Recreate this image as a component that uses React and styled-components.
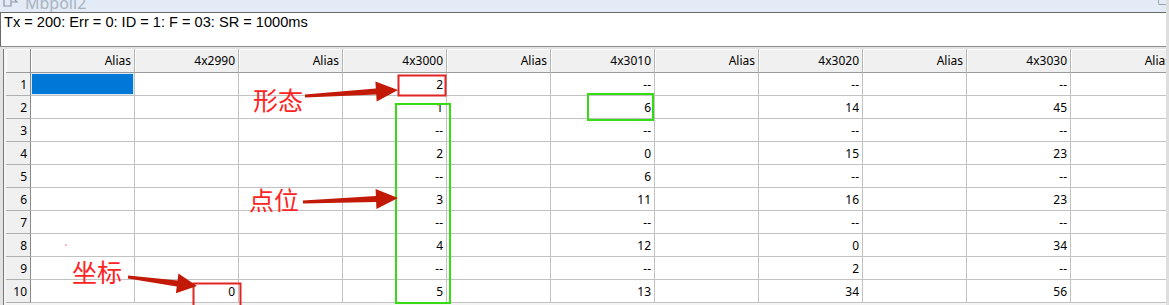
import React from 'react';
import styled, { createGlobalStyle } from 'styled-components';

const GlobalStyle = createGlobalStyle`
  html, body {
    margin: 0;
    padding: 0;
    background: #ffffff;
  }
  * {
    box-sizing: border-box;
  }
`;

const Page = styled.div`
  position: relative;
  width: 1169px;
  height: 305px;
  overflow: hidden;
  background: #ffffff;
  display: flex;
  flex-direction: column;
  border-right: 3px solid #dedede;
`;

const TitleBar = styled.div`
  height: 12px;
  flex: none;
  display: flex;
  align-items: flex-start;
  gap: 6px;
  padding-left: 3px;
  overflow: hidden;
  background: #e2ebf6;
  position: relative;
`;

const TitleText = styled.span`
  font-family: 'Noto Sans', sans-serif;
  font-size: 16px;
  line-height: 16px;
  color: #a9b3c0;
  margin-top: -5px;
`;

const CornerBox = styled.div`
  position: absolute;
  right: -4px;
  top: -4px;
  width: 12px;
  height: 9px;
  border-left: 1px solid #9aa3ad;
  border-bottom: 1px solid #9aa3ad;
  border-bottom-left-radius: 2px;
`;

const StatusBox = styled.div`
  height: 35px;
  flex: none;
  border-top: 1px solid #6a6a6a;
  border-left: 1px solid #6a6a6a;
  border-bottom: 1px solid #8c8c8c;
  padding: 1px 0 0 3px;
  font-family: 'Liberation Sans', Arial, sans-serif;
  font-size: 14.6px;
  color: #000000;
  background: #ffffff;
`;

const GridFrame = styled.div`
  flex: 1;
  display: flex;
  border-top: 2px solid #e3e3e3;
  background: #e3e3e3;
  padding-left: 3px;
  overflow: hidden;
`;

const GridInner = styled.div`
  flex: 1;
  border-left: 1px solid #7a7a7a;
  padding-left: 2px;
  background: #f4f4f4;
  overflow: hidden;
`;

const Grid = styled.div`
  display: grid;
  grid-template-columns: 25px repeat(11, 104px);
  grid-auto-rows: 23px;
  grid-template-rows: 24px;
  font-family: 'Noto Sans', sans-serif;
  font-size: 12px;
  color: #000000;
  background: #ffffff;
`;

const HeadCell = styled.div`
  background: #f0f0f0;
  border-right: 1px solid ${p => (p.$corner ? '#8a8a8a' : '#b4b4b4')};
  border-bottom: 1px solid #9a9a9a;
  box-shadow: inset 1px 1px 0 #ffffff;
  display: flex;
  align-items: center;
  justify-content: flex-end;
  padding-right: 3px;
  white-space: nowrap;
  overflow: hidden;
`;

const RowHead = styled.div`
  background: #f0f0f0;
  border-right: 1px solid #8a8a8a;
  border-bottom: 1px solid #b0b0b0;
  display: flex;
  align-items: center;
  justify-content: flex-end;
  padding-right: 3px;
`;

const Cell = styled.div`
  background: ${p => (p.$selected ? '#0078d7' : '#ffffff')};
  border-right: 1px solid #c2c2c2;
  border-bottom: 1px solid #c2c2c2;
  box-shadow: ${p => (p.$selected ? 'inset 0 0 0 1px #d6e9f8' : 'none')};
  display: flex;
  align-items: center;
  justify-content: flex-end;
  padding-right: 3px;
  white-space: nowrap;
`;

const Overlay = styled.svg`
  position: absolute;
  left: 0;
  top: 0;
  pointer-events: none;
`;

const Label = styled.div`
  position: absolute;
  left: ${p => p.$x}px;
  top: ${p => p.$y}px;
  font-family: 'Noto Sans CJK SC', 'Noto Sans', sans-serif;
  font-size: 25px;
  line-height: 25px;
  color: #ff2424;
`;

const columns = ['Alias', '4x2990', 'Alias', '4x3000', 'Alias', '4x3010', 'Alias', '4x3020', 'Alias', '4x3030', 'Alias'];

const data = {
  3: ['2', '1', '--', '2', '--', '3', '--', '4', '--', '5'],
  5: ['--', '6', '--', '0', '6', '11', '--', '12', '--', '13'],
  7: ['--', '14', '--', '15', '--', '16', '--', '0', '2', '34'],
  9: ['--', '45', '--', '23', '--', '23', '--', '34', '--', '56'],
};

const valueAt = (col, row) => {
  if (col === 1) return row === 9 ? '0' : '';
  if (data[col]) return data[col][row];
  return '';
};

const rows = Array.from({ length: 10 }, (_, i) => i);

function AppIcon() {
  return (
    <svg width="16" height="12" viewBox="0 0 16 12">
      <path d="M1 0 L1 6 L8 6 L8 0" fill="none" stroke="#8d96a3" strokeWidth="1.2" />
      <path d="M9 2 L14 2 L12 0" fill="none" stroke="#8d96a3" strokeWidth="1.2" />
    </svg>
  );
}

// tapered arrow: thin tail widening to a head at the tip
function Arrow({ x1, y1, x2, y2, head = 22, half = 10, tail = 1.5, shaft = 3 }) {
  const dx = x2 - x1;
  const dy = y2 - y1;
  const len = Math.hypot(dx, dy);
  const ux = dx / len;
  const uy = dy / len;
  const nx = -uy;
  const ny = ux;
  const bx = x2 - ux * head;
  const by = y2 - uy * head;
  const pts = [
    [x1 + nx * tail, y1 + ny * tail],
    [bx + nx * shaft, by + ny * shaft],
    [bx + nx * half, by + ny * half],
    [x2, y2],
    [bx - nx * half, by - ny * half],
    [bx - nx * shaft, by - ny * shaft],
    [x1 - nx * tail, y1 - ny * tail],
  ];
  return <polygon points={pts.map(p => p.join(',')).join(' ')} fill="#c21a06" />;
}

export default function App() {
  return (
    <>
      <GlobalStyle />
      <Page>
        <TitleBar>
          <AppIcon />
          <TitleText>Mbpoll2</TitleText>
          <CornerBox />
        </TitleBar>
        <StatusBox>Tx = 200: Err = 0: ID = 1: F = 03: SR = 1000ms</StatusBox>
        <GridFrame>
          <GridInner>
            <Grid>
              <HeadCell $corner />
              {columns.map((c, i) => (
                <HeadCell key={i}>{c}</HeadCell>
              ))}
              {rows.map(r => (
                <React.Fragment key={r}>
                  <RowHead>{r + 1}</RowHead>
                  {columns.map((c, ci) => (
                    <Cell key={ci} $selected={r === 0 && ci === 0}>
                      {valueAt(ci, r)}
                    </Cell>
                  ))}
                </React.Fragment>
              ))}
            </Grid>
          </GridInner>
        </GridFrame>

        <Overlay width="1169" height="305" viewBox="0 0 1169 305">
          <rect x="398.5" y="75.5" width="47" height="20" fill="none" stroke="#e22424" strokeWidth="2" />
          <rect x="396" y="104" width="54" height="199" fill="none" stroke="#33dd11" strokeWidth="2" />
          <rect x="588" y="94" width="65" height="26" fill="none" stroke="#33dd11" strokeWidth="2" />
          <rect x="193.5" y="283.5" width="47" height="24" fill="none" stroke="#e22424" strokeWidth="2" />
          <Arrow x1={305} y1={96} x2={398} y2={90} />
          <Arrow x1={303} y1={202} x2={398} y2={198} />
          <Arrow x1={128} y1={277} x2={197} y2={286} head={20} half={10} />
          <circle cx="66" cy="245" r="0.8" fill="#ff6060" />
        </Overlay>
        <Label $x={253} $y={87}>形态</Label>
        <Label $x={249} $y={187}>点位</Label>
        <Label $x={72} $y={259}>坐标</Label>
      </Page>
    </>
  );
}
